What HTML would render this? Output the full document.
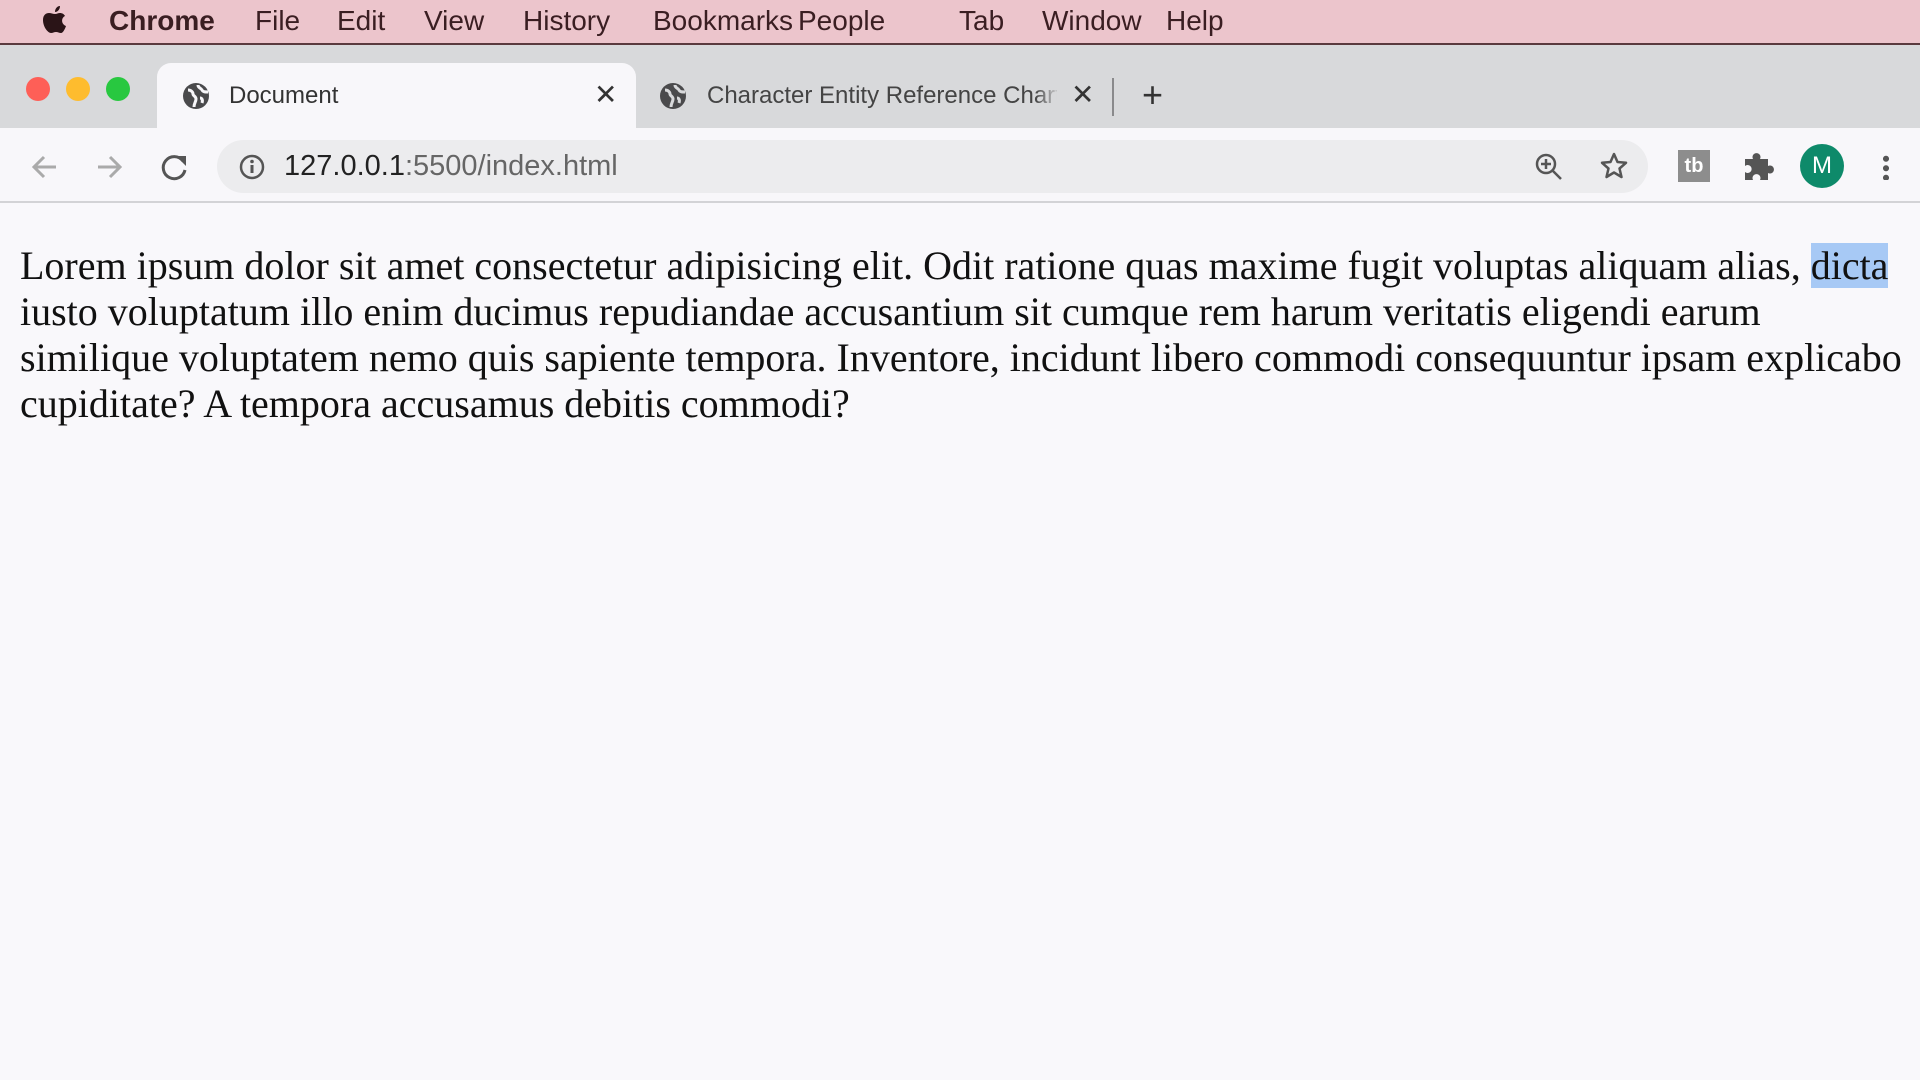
<!DOCTYPE html>
<html><head><meta charset="utf-8"><style>
*{margin:0;padding:0;box-sizing:border-box}
body{width:1920px;height:1080px;overflow:hidden;background:#f9f8fb;font-family:"Liberation Sans",sans-serif;position:relative}
.abs{position:absolute}
#menu{left:0;top:0;width:1920px;height:45px;background:#ecc5cc;border-bottom:2px solid #5a3a3e}
#menu span{position:absolute;top:5px;font-size:28px;color:#3a1e22}
#strip{left:0;top:45px;width:1920px;height:83px;background:#d8d9db}
.dot{width:24px;height:24px;border-radius:50%;top:77px}
#tab{left:157px;top:63px;width:479px;height:66px;background:#f8f7fa;border-radius:14px 14px 0 0}
.tt{font-size:24px;color:#333;top:82px}
#tool{left:0;top:128px;width:1920px;height:75px;background:#f8f7fa;border-bottom:2px solid #d3d3d6}
#omni{left:217px;top:140px;width:1431px;height:53px;background:#ececee;border-radius:27px}
#txt{left:20px;top:243px;width:1920px;white-space:nowrap;font-family:"Liberation Serif",serif;font-size:40px;line-height:46px;color:#111}
.sel{background:#a7c9f5}
</style></head><body>
<div id="menu" class="abs">
<svg class="abs" style="left:42px;top:6px" width="26" height="31" viewBox="0 0 26 31"><path d="M18 0c0 3-2 6-5 6 0-3 2-6 5-6zM13 8c2 0 3-1 5-1 2 0 4 1 5 3-4 2-4 8 1 10-1 3-3 7-5 7s-3-1-5-1-3 1-5 1c-3 0-8-6-8-13 0-5 3-7 6-7 2 0 4 1 6 1z" fill="#2a1417"/></svg>
<span style="left:109px;font-weight:bold">Chrome</span>
<span style="left:255px">File</span><span style="left:337px">Edit</span><span style="left:424px">View</span><span style="left:523px">History</span><span style="left:653px">Bookmarks</span><span style="left:798px">People</span><span style="left:959px">Tab</span><span style="left:1042px">Window</span><span style="left:1166px">Help</span>
</div>
<div id="strip" class="abs"></div>
<div class="abs dot" style="left:26px;background:#fe5f57"></div>
<div class="abs dot" style="left:66px;background:#febc2e"></div>
<div class="abs dot" style="left:106px;background:#28c840"></div>
<div id="tab" class="abs"></div>
<svg class="abs" style="left:182px;top:82px" width="28" height="28" viewBox="0 0 28 28"><circle cx="14" cy="14" r="13" fill="#4a4a4c"/><path d="M6 8c3 0 5 2 5 4s3 2 3 5-2 4-2 8M16 3c0 3 3 3 4 5s3 2 6 2M18 16c2 0 3 2 2 5" stroke="#f8f7fa" stroke-width="3" fill="none"/></svg>
<div class="abs tt" style="left:229px">Document</div>
<div class="abs" style="left:594px;top:78px;font-size:28px;color:#333">✕</div>
<svg class="abs" style="left:659px;top:82px" width="28" height="28" viewBox="0 0 28 28"><circle cx="14" cy="14" r="13" fill="#4a4a4c"/><path d="M6 8c3 0 5 2 5 4s3 2 3 5-2 4-2 8M16 3c0 3 3 3 4 5s3 2 6 2M18 16c2 0 3 2 2 5" stroke="#d8d9db" stroke-width="3" fill="none"/></svg>
<div class="abs tt" style="left:707px;width:350px;overflow:hidden;white-space:nowrap;color:#444">Character Entity Reference Chart</div>
<div class="abs" style="left:1035px;top:80px;width:25px;height:32px;background:linear-gradient(90deg,rgba(216,217,219,0),#d8d9db)"></div>
<div class="abs" style="left:1071px;top:78px;font-size:28px;color:#333">✕</div>
<div class="abs" style="left:1112px;top:78px;width:2px;height:38px;background:#8a8a8c"></div>
<div class="abs" style="left:1142px;top:74px;font-size:36px;color:#333">+</div>
<div id="tool" class="abs"></div>
<div id="omni" class="abs"></div>
<svg class="abs" style="left:30px;top:152px" width="160" height="30" viewBox="0 0 160 30"><path d="M26 15H4M14 5L4 15l10 10" stroke="#aaa" stroke-width="3" fill="none"/><path d="M68 15h22M80 5l10 10-10 10" stroke="#aaa" stroke-width="3" fill="none"/><path d="M153 9a11 11 0 1 0 2 9" stroke="#555" stroke-width="3" fill="none"/><path d="M146 4h10v10z" fill="#555"/></svg>
<svg class="abs" style="left:239px;top:154px" width="26" height="26" viewBox="0 0 26 26"><circle cx="13" cy="13" r="11" stroke="#555" stroke-width="2.5" fill="none"/><path d="M13 11v8" stroke="#555" stroke-width="3"/><circle cx="13" cy="7.5" r="1.8" fill="#555"/></svg>
<div class="abs" style="left:284px;top:150px;font-size:29px;color:#222">127.0.0.1<span style="color:#666">:5500/index.html</span></div>
<svg class="abs" style="left:1534px;top:152px" width="30" height="30" viewBox="0 0 30 30"><circle cx="12" cy="12" r="9" stroke="#555" stroke-width="2.5" fill="none"/><path d="M19 19l8 8M12 7v10M7 12h10" stroke="#555" stroke-width="2.5"/></svg>
<svg class="abs" style="left:1599px;top:151px" width="30" height="30" viewBox="0 0 30 30"><path d="M15 3l3.5 8 8.5.8-6.5 5.7 2 8.5L15 21.5 7.5 26l2-8.5L3 11.8l8.5-.8z" stroke="#555" stroke-width="2.5" fill="none" stroke-linejoin="round"/></svg>
<div class="abs" style="left:1678px;top:150px;width:32px;height:32px;background:#8d8d8d;color:#fff;font-weight:bold;font-size:20px;text-align:center;line-height:32px">tb</div>
<svg class="abs" style="left:1743px;top:151px" width="32" height="30" viewBox="0 0 32 30"><path d="M2 8h8a4 4 0 1 1 7 0h8v7a4 4 0 1 1 0 7v7h-8a4 4 0 1 0-7 0H2v-8a4 4 0 1 0 0-6z" fill="#555"/></svg>
<div class="abs" style="left:1800px;top:144px;width:44px;height:44px;border-radius:50%;background:#0e8a6a;color:#fff;font-size:24px;text-align:center;line-height:44px">M</div>
<div class="abs" style="left:1883px;top:154px;width:6px;height:26px;background:radial-gradient(circle,#555 2.8px,transparent 3.2px) 0 0/6px 9.5px repeat-y"></div>
<div id="txt" class="abs">Lorem ipsum dolor sit amet consectetur adipisicing elit. Odit ratione quas maxime fugit voluptas aliquam alias, <span class="sel">dicta</span><br>iusto voluptatum illo enim ducimus repudiandae accusantium sit cumque rem harum veritatis eligendi earum<br>similique voluptatem nemo quis sapiente tempora. Inventore, incidunt libero commodi consequuntur ipsam explicabo<br>cupiditate? A tempora accusamus debitis commodi?</div>
</body></html>
